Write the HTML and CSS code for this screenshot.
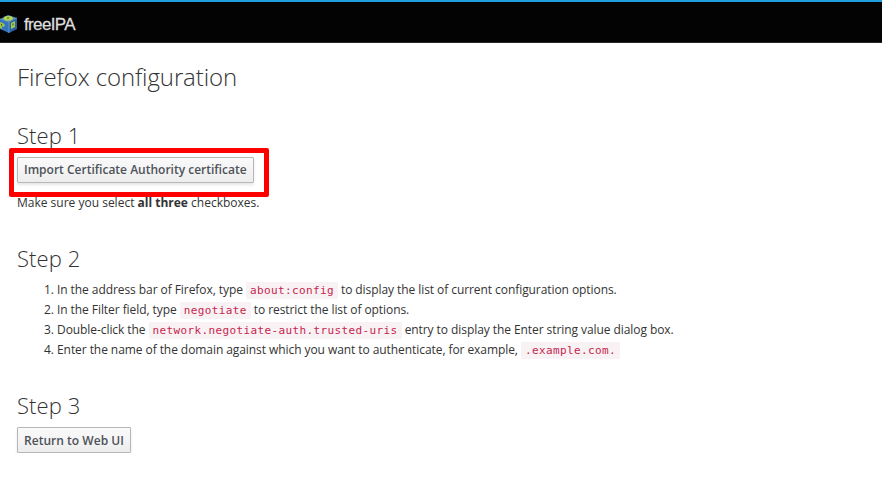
FILE: index.html
```html
<!DOCTYPE html>
<html lang="en">
<head>
<meta charset="utf-8">
<title>Firefox configuration</title>
<link rel="stylesheet" href="styles.css">
</head>
<body>
<header class="navbar">
<svg class="logo" viewBox="0 0 18 20" width="18" height="20">
<path d="M0 5 8 1l9 3-8 4z" fill="#568fbd"/>
<path d="M0 5 9 8v11l-9-4z" fill="#3474bd"/>
<path d="M17 4 9 8v11l8-4z" fill="#2860a7"/>
<path d="M0 5 9 8l8-4M9 8v11" fill="none" stroke="#79add3" stroke-width=".7"/>
<ellipse cx="8.2" cy="4.2" rx="4.5" ry="2.3" fill="#b5d750"/>
<path d="M0 8l3 1 2 2-1 2-2-1v3l-2-1z" fill="#9cc048"/>
<path d="M11 9l4-2v6l-4 2z" fill="#a9cb42"/>
<path d="M7 4h2M1.5 10v1.5M13 9.5v2" stroke="#315624" stroke-width="1"/>
</svg>
<span class="brand">freeIPA</span>
</header>
<main class="content">
<h1>Firefox configuration</h1>
<section class="step step-one">
<h2>Step 1</h2>
<div class="highlight"><button class="btn">Import Certificate Authority certificate</button></div>
<p>Make sure you select <strong>all three</strong> checkboxes.</p>
</section>
<section class="step step-two">
<h2>Step 2</h2>
<ol>
<li>In the address bar of Firefox, type <code>about:config</code> to display the list of current configuration options.</li>
<li>In the Filter field, type <code>negotiate</code> to restrict the list of options.</li>
<li>Double-click the <code>network.negotiate-auth.trusted-uris</code> entry to display the Enter string value dialog box.</li>
<li>Enter the name of the domain against which you want to authenticate, for example, <code>.example.com.</code></li>
</ol>
</section>
<section class="step step-three">
<h2>Step 3</h2>
<button class="btn">Return to Web UI</button>
</section>
</main>
</body>
</html>
```
FILE: styles.css
```css
* { box-sizing: border-box; }
body { margin: 0; background: #fff; color: #333; font: 12px/20px "Open Sans", sans-serif; }
.navbar { height: 43px; display: flex; align-items: center; padding-top: 4px; background: #030303; border-top: 2px solid #1d9ede; border-bottom: 1px solid #292929; }
.logo { display: block; }
.brand { margin: 2px 0 0 6px; color: #ddd; font: 17px/20px "Liberation Sans", sans-serif; letter-spacing: -0.65px; -webkit-text-stroke: 0.3px #ddd; }
.content { padding: 21px 17px 0; }
h1, h2 { margin: 0; font-weight: 300; line-height: 26px; }
h1 { font-size: 24px; letter-spacing: -0.1px; }
h2 { font-size: 22px; letter-spacing: 0.1px; }
.step { margin-top: 33px; }
.step-one { margin-top: 32px; }
.highlight { width: 260px; height: 49px; margin: 0 0 0 -8px; padding: 4px 3px; border: 5px solid #f00; border-radius: 2px; }
.btn { display: block; height: 26px; padding: 0 6px; border: 1px solid #b7b7b7; border-radius: 1px; background: linear-gradient(#fafafa, #ededed); color: #4d5258; font: 600 12px/24px "Open Sans", sans-serif; white-space: nowrap; box-shadow: 0 2px 3px rgba(3, 3, 3, 0.1); }
p { margin: -4px 0 0; }
.step-two { margin-top: 32px; }
ol { margin: 9px 0 0; padding-left: 40px; }
li { letter-spacing: -0.07px; }
code { padding: 2px 4px; border-radius: 1px; background: #f9f2f4; color: #c7254e; font: 11px "DejaVu Sans Mono", monospace; letter-spacing: 0.378px; }
.step-three { margin-top: 32px; }
.step-three .btn { margin-top: 9px; width: 114px; padding-top: 1px; letter-spacing: 0.03px; }
```
